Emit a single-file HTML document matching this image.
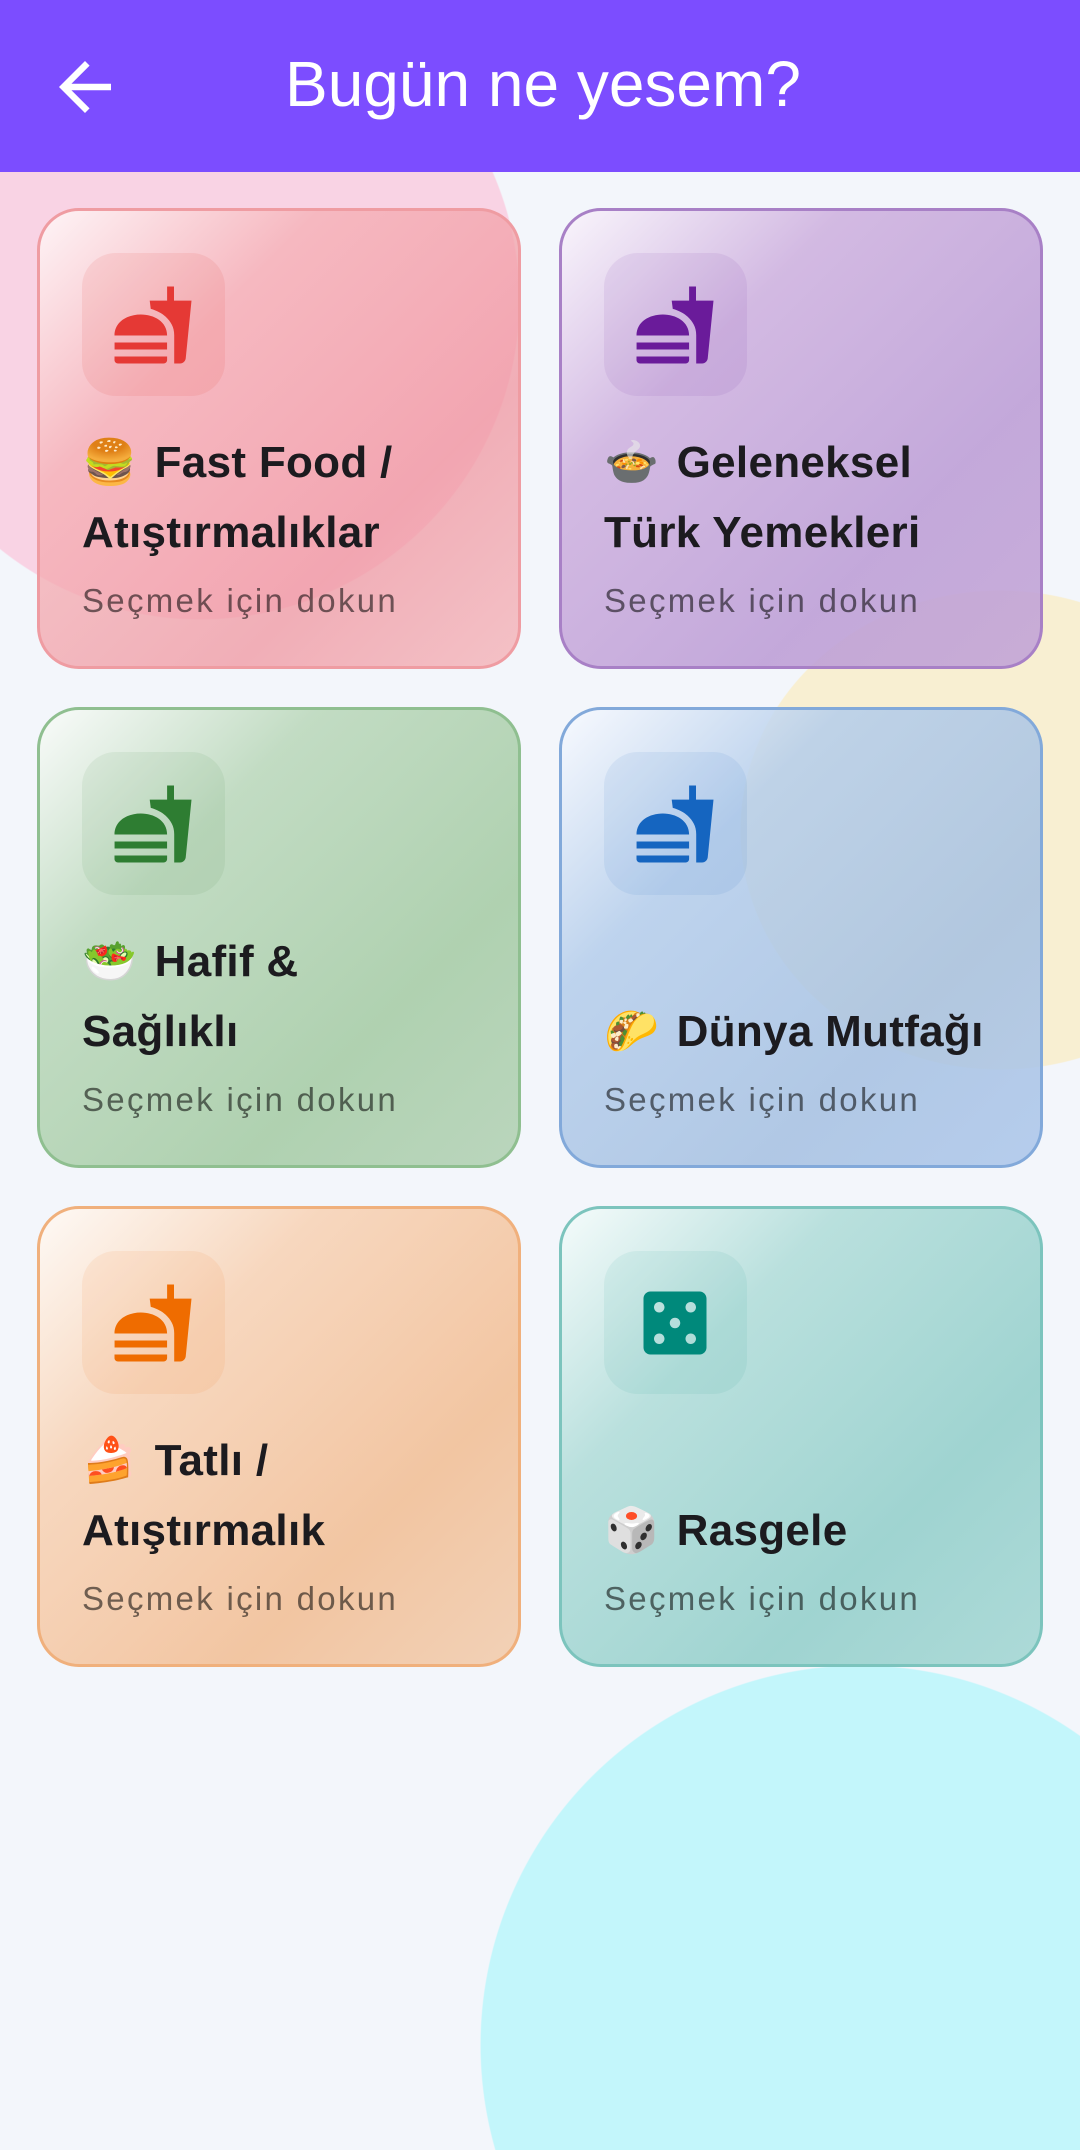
<!DOCTYPE html>
<html><head><meta charset="utf-8"><style>
*{margin:0;padding:0;box-sizing:border-box}
html,body{width:1080px;height:2150px;overflow:hidden}
body{background:#f3f6fb;font-family:"Liberation Sans","Noto Sans CJK JP",sans-serif}
#w{position:relative;width:1080px;height:2150px;overflow:hidden;background:
radial-gradient(circle 320px at 200px 300px,#f9d3e4 99.6%,rgba(249,211,228,0) 100%),
radial-gradient(260px 240px at 1000px 830px,#f8efd2 99.6%,rgba(248,239,210,0) 100%),
radial-gradient(circle 380px at 860px 2045px,#c3f6fb 99.7%,rgba(195,246,251,0) 100%),
#f3f6fb}
.bar{position:absolute;left:0;top:0;width:1080px;height:172px;background:#7c4dff;z-index:5}
.bar h1{position:absolute;left:285px;top:46px;font-size:64px;font-weight:400;color:#fff;line-height:76px;white-space:nowrap}
.card{position:absolute;width:484px;height:461px;border-radius:42px;border:3px solid;overflow:hidden}
.ib{position:absolute;left:42px;top:42px;width:143px;height:143px;border-radius:34px}
.ib svg{position:absolute;left:29px;top:30px;width:84px;height:84px}
.txt{position:absolute;left:42px;right:10px;bottom:45px}
.t{font-size:44px;font-weight:700;color:#1c1b1f;line-height:70px;white-space:nowrap;letter-spacing:0.3px}
.s{font-size:33px;color:rgba(0,0,0,0.55);line-height:40px;margin-top:13px;letter-spacing:2.3px;white-space:nowrap}
.e{font-family:"Noto Color Emoji","Liberation Sans",sans-serif;font-weight:400;margin-right:5px}
</style></head><body><div id="w">
<div class="bar">
<svg style="position:absolute;left:46px;top:48px" width="78" height="78" viewBox="0 0 24 24"><path fill="#fff" d="M20 11H7.83l5.59-5.59L12 4l-8 8 8 8 1.41-1.41L7.83 13H20v-2z"/></svg>
<h1>Bugün ne yesem?</h1>
</div>

<div class="card" style="left:37px;top:208px;border-color:#ef9ca2;background:linear-gradient(135deg,rgba(255,250,250,.85) 0%,rgba(245,175,180,.75) 30%,rgba(240,150,160,.75) 70%,rgba(244,180,185,.8) 100%)">
<div class="ib" style="background:rgba(229,57,53,.1)"><svg viewBox="0 0 24 24"><path fill="#e53935" d="M18.06 22.99h1.66c.84 0 1.53-.64 1.63-1.46L23 5.05h-5V1h-1.97v4.05h-4.97l.3 2.34c1.71.47 3.31 1.32 4.27 2.26 1.44 1.42 2.43 2.89 2.43 5.29v8.05zM1 21.99V21h15.03v.99c0 .55-.45 1-1.01 1H2.01c-.56 0-1.01-.45-1.01-1zm15.03-7c0-8-15.03-8-15.03 0h15.03zM1.02 17h15v2h-15z"/></svg></div>
<div class="txt"><div class="t"><span class="e">🍔</span> Fast Food /<br>Atıştırmalıklar</div><div class="s">Seçmek için dokun</div></div></div>

<div class="card" style="left:559px;top:208px;border-color:#a880c6;background:linear-gradient(135deg,rgba(250,245,252,.9) 0%,rgba(205,175,222,.85) 30%,rgba(190,160,215,.9) 70%,rgba(195,165,215,.9) 100%)">
<div class="ib" style="background:rgba(106,27,154,.08)"><svg viewBox="0 0 24 24"><path fill="#6a1b9a" d="M18.06 22.99h1.66c.84 0 1.53-.64 1.63-1.46L23 5.05h-5V1h-1.97v4.05h-4.97l.3 2.34c1.71.47 3.31 1.32 4.27 2.26 1.44 1.42 2.43 2.89 2.43 5.29v8.05zM1 21.99V21h15.03v.99c0 .55-.45 1-1.01 1H2.01c-.56 0-1.01-.45-1.01-1zm15.03-7c0-8-15.03-8-15.03 0h15.03zM1.02 17h15v2h-15z"/></svg></div>
<div class="txt"><div class="t"><span class="e">🍲</span> Geleneksel<br>Türk Yemekleri</div><div class="s">Seçmek için dokun</div></div></div>

<div class="card" style="left:37px;top:707px;border-color:#8fbf90;background:linear-gradient(135deg,rgba(250,252,250,.9) 0%,rgba(185,215,185,.85) 30%,rgba(168,205,168,.9) 70%,rgba(180,210,182,.9) 100%)">
<div class="ib" style="background:rgba(46,125,50,.08)"><svg viewBox="0 0 24 24"><path fill="#2e7d32" d="M18.06 22.99h1.66c.84 0 1.53-.64 1.63-1.46L23 5.05h-5V1h-1.97v4.05h-4.97l.3 2.34c1.71.47 3.31 1.32 4.27 2.26 1.44 1.42 2.43 2.89 2.43 5.29v8.05zM1 21.99V21h15.03v.99c0 .55-.45 1-1.01 1H2.01c-.56 0-1.01-.45-1.01-1zm15.03-7c0-8-15.03-8-15.03 0h15.03zM1.02 17h15v2h-15z"/></svg></div>
<div class="txt"><div class="t"><span class="e">🥗</span> Hafif &amp;<br>Sağlıklı</div><div class="s">Seçmek için dokun</div></div></div>

<div class="card" style="left:559px;top:707px;border-color:#82a9da;background:linear-gradient(135deg,rgba(248,250,255,.9) 0%,rgba(180,205,235,.85) 30%,rgba(165,192,225,.85) 70%,rgba(175,200,235,.9) 100%)">
<div class="ib" style="background:rgba(21,101,192,.08)"><svg viewBox="0 0 24 24"><path fill="#1565c0" d="M18.06 22.99h1.66c.84 0 1.53-.64 1.63-1.46L23 5.05h-5V1h-1.97v4.05h-4.97l.3 2.34c1.71.47 3.31 1.32 4.27 2.26 1.44 1.42 2.43 2.89 2.43 5.29v8.05zM1 21.99V21h15.03v.99c0 .55-.45 1-1.01 1H2.01c-.56 0-1.01-.45-1.01-1zm15.03-7c0-8-15.03-8-15.03 0h15.03zM1.02 17h15v2h-15z"/></svg></div>
<div class="txt"><div class="t"><span class="e">🌮</span> Dünya Mutfağı</div><div class="s">Seçmek için dokun</div></div></div>

<div class="card" style="left:37px;top:1206px;border-color:#f0b07c;background:linear-gradient(135deg,rgba(255,250,245,.9) 0%,rgba(248,210,180,.85) 30%,rgba(242,192,152,.9) 70%,rgba(242,205,175,.9) 100%)">
<div class="ib" style="background:rgba(239,108,0,.08)"><svg viewBox="0 0 24 24"><path fill="#ef6c00" d="M18.06 22.99h1.66c.84 0 1.53-.64 1.63-1.46L23 5.05h-5V1h-1.97v4.05h-4.97l.3 2.34c1.71.47 3.31 1.32 4.27 2.26 1.44 1.42 2.43 2.89 2.43 5.29v8.05zM1 21.99V21h15.03v.99c0 .55-.45 1-1.01 1H2.01c-.56 0-1.01-.45-1.01-1zm15.03-7c0-8-15.03-8-15.03 0h15.03zM1.02 17h15v2h-15z"/></svg></div>
<div class="txt"><div class="t"><span class="e">🍰</span> Tatlı /<br>Atıştırmalık</div><div class="s">Seçmek için dokun</div></div></div>

<div class="card" style="left:559px;top:1206px;border-color:#7cc4bd;background:linear-gradient(135deg,rgba(245,252,251,.9) 0%,rgba(175,220,216,.85) 30%,rgba(150,208,204,.9) 70%,rgba(165,215,212,.9) 100%)">
<div class="ib" style="background:rgba(0,137,123,.07)"><svg viewBox="0 0 24 24"><path fill="#00897b" d="M19 3H5c-1.1 0-2 .9-2 2v14c0 1.1.9 2 2 2h14c1.1 0 2-.9 2-2V5c0-1.1-.9-2-2-2zM7.5 18c-.83 0-1.5-.67-1.5-1.5S6.67 15 7.5 15s1.5.67 1.5 1.5S8.33 18 7.5 18zm0-9C6.67 9 6 8.33 6 7.5S6.67 6 7.5 6 9 6.67 9 7.5 8.33 9 7.5 9zm4.5 4.5c-.83 0-1.5-.67-1.5-1.5s.67-1.5 1.5-1.5 1.5.67 1.5 1.5-.67 1.5-1.5 1.5zm4.5 4.5c-.83 0-1.5-.67-1.5-1.5s.67-1.5 1.5-1.5 1.5.67 1.5 1.5-.67 1.5-1.5 1.5zm0-9c-.83 0-1.5-.67-1.5-1.5S15.67 6 16.5 6s1.5.67 1.5 1.5S17.33 9 16.5 9z"/></svg></div>
<div class="txt"><div class="t"><span class="e">🎲</span> Rasgele</div><div class="s">Seçmek için dokun</div></div></div>
</div></body></html>
